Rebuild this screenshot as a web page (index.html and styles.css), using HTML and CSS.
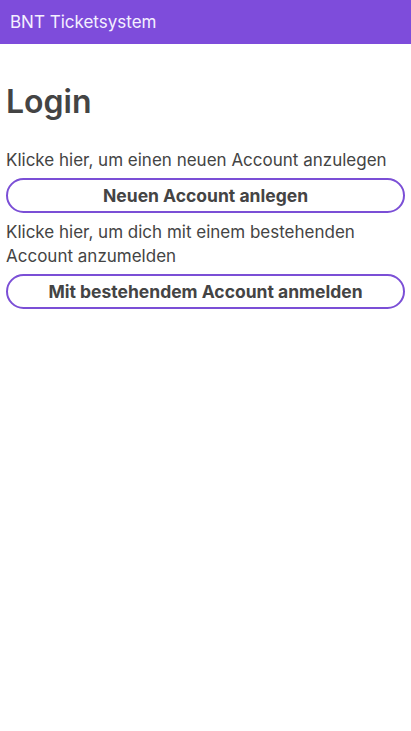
FILE: index.html
```html
<!DOCTYPE html>
<html lang="de">
<head>
<meta charset="utf-8">
<link rel="stylesheet" href="styles.css">
</head>
<body>
<header class="topbar">BNT Ticketsystem</header>
<main class="content">
  <h1 class="title">Login</h1>
  <p class="hint">Klicke hier, um einen neuen Account anzulegen</p>
  <button class="btn">Neuen Account anlegen</button>
  <p class="hint">Klicke hier, um dich mit einem bestehenden Account anzumelden</p>
  <button class="btn">Mit bestehendem Account anmelden</button>
</main>
</body>
</html>
```
FILE: styles.css
```css
* { box-sizing: border-box; }
body {
  margin: 0;
  font-family: Inter, "Noto Sans", sans-serif;
  color: #444;
  background: #fff;
}
.topbar {
  height: 44px;
  background: #7e4cdb;
  color: #f4f0ff;
  font-size: 17px;
  padding: 0 10px;
  display: flex;
  align-items: center;
}
.content {
  padding: 0 6px;
  display: flex;
  flex-direction: column;
}
.title {
  font-size: 32px;
  font-weight: 600;
  margin: 38px 0 26px;
  line-height: 40px;
}
.hint {
  margin: 0;
  font-size: 17px;
  line-height: 24px;
}
.btn {
  height: 35px;
  border: 2px solid #7b4fd6;
  border-radius: 18px;
  background: #fff;
  color: #444;
  font-family: inherit;
  font-size: 17.5px;
  font-weight: 700;
  margin: 6px 0 7px;
}
```
